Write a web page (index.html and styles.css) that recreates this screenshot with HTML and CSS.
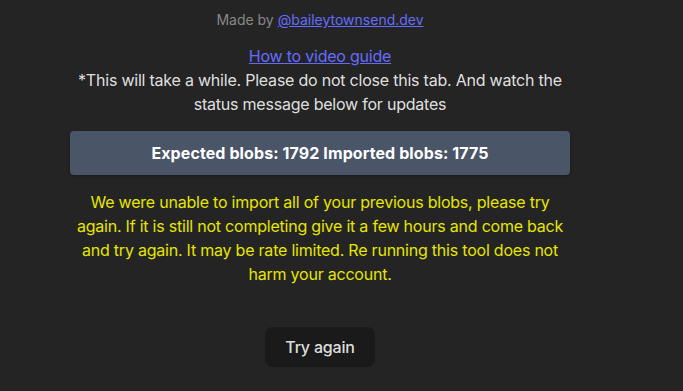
FILE: index.html
```html
<!DOCTYPE html>
<html>
<head>
<meta charset="utf-8">
<link rel="stylesheet" href="styles.css">
</head>
<body>
<div class="page">
  <main class="col">
    <p class="made">Made by <a href="#">@baileytownsend.dev</a></p>
    <div class="intro">
      <a href="#">How to video guide</a>
      <p>*This will take a while. Please do not close this tab. And watch the status message below for updates</p>
    </div>
    <div class="status">Expected blobs: 1792 Imported blobs: 1775</div>
    <p class="warn">We were unable to import all of your previous blobs, please try again. If it is still not completing give it a few hours and come back and try again. It may be rate limited. Re running this tool does not harm your account.</p>
    <button class="btn">Try again</button>
  </main>
</div>
</body>
</html>
```
FILE: styles.css
```css
html, body {
  margin: 0;
  padding: 0;
  background: #242424;
  height: 100%;
}
body {
  font-family: Inter, "Noto Sans", sans-serif;
  color: rgba(255, 255, 255, 0.87);
  font-size: 16px;
  line-height: 24px;
}
.page {
  width: 640px;
  display: flex;
  justify-content: center;
}
.col {
  width: 500px;
  display: flex;
  flex-direction: column;
  align-items: center;
  text-align: center;
}
a {
  color: #646cff;
  text-decoration: underline;
}
.made {
  margin: 10px 0 0;
  font-size: 14px;
  line-height: 20px;
  color: #888;
}
.intro {
  margin-top: 14px;
  width: 520px;
  letter-spacing: -0.22px;
}
.intro p {
  margin: 0;
}
.status {
  margin-top: 15px;
  width: 100%;
  box-sizing: border-box;
  height: 44px;
  display: flex;
  align-items: center;
  justify-content: center;
  background: #4a5568;
  border-radius: 4px;
  box-shadow: 0 1px 3px rgba(0, 0, 0, 0.3);
  font-weight: 700;
  color: #fff;
  letter-spacing: 0.1px;
}
.warn {
  margin: 15px 0 0;
  width: 500px;
  color: #e6e600;
  line-height: 24px;
  letter-spacing: -0.22px;
}
.btn {
  margin-top: 41px;
  font-family: inherit;
  font-size: 16px;
  font-weight: 500;
  line-height: 24px;
  letter-spacing: -0.2px;
  color: rgba(255, 255, 255, 0.87);
  background: #1a1a1a;
  border: 1px solid transparent;
  border-radius: 8px;
  padding: 7px 19px;
  cursor: pointer;
}
```
